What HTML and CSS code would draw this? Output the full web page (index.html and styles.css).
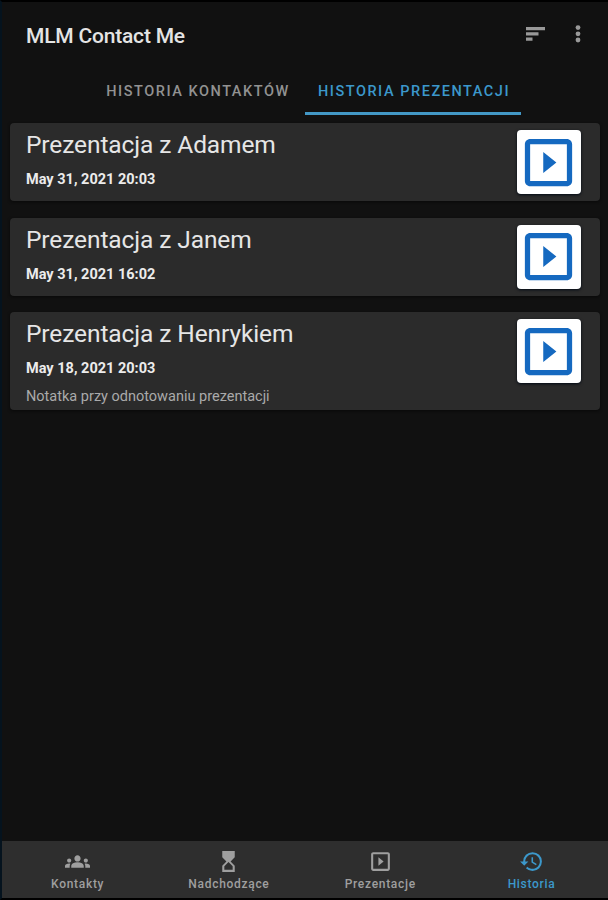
FILE: index.html
```
<!DOCTYPE html>
<html lang="pl">
<head>
<meta charset="utf-8">
<title>MLM Contact Me</title>
<link rel="stylesheet" href="styles.css">
</head>
<body>
<svg class="sprite" aria-hidden="true">
  <symbol id="slideshow" viewBox="0 0 24 24"><path d="M10 8v8l5-4-5-4zm9-5H5c-1.100 0-2 .9-2 2v14c0 1.100.9 2 2 2h14c1.100 0 2-.9 2-2V5c0-1.100-.9-2-2-2zm0 16H5V5h14v14z"/></symbol>
</svg>
<div class="app">
  <header class="bar">
    <h1 class="title">MLM Contact Me</h1>
    <svg class="sort" viewBox="0 0 19 14"><path d="M0 0h19v3.200H0zM0 5.300h12.500v3.200H0zM0 10.600h6.500v3.200H0z"/></svg>
    <svg class="more" viewBox="0 0 6 18"><circle cx="3" cy="2.600" r="2.400"/><circle cx="3" cy="8.800" r="2.400"/><circle cx="3" cy="15" r="2.400"/></svg>
  </header>
  <nav class="tabs">
    <a class="tab"><span>HISTORIA KONTAKTÓW</span></a>
    <a class="tab active"><span>HISTORIA PREZENTACJI</span></a>
  </nav>
  <main class="list">
    <article class="card">
      <div class="info"><h2 class="name">Prezentacja z Adamem</h2><p class="date">May 31, 2021 20:03</p></div>
      <button class="play"><svg><use href="#slideshow"/></svg></button>
    </article>
    <article class="card">
      <div class="info"><h2 class="name">Prezentacja z Janem</h2><p class="date">May 31, 2021 16:02</p></div>
      <button class="play"><svg><use href="#slideshow"/></svg></button>
    </article>
    <article class="card tall">
      <div class="info"><h2 class="name">Prezentacja z Henrykiem</h2><p class="date">May 18, 2021 20:03</p><p class="note">Notatka przy odnotowaniu prezentacji</p></div>
      <button class="play"><svg><use href="#slideshow"/></svg></button>
    </article>
  </main>
  <footer class="nav">
    <a class="item"><svg viewBox="0 0 24 24"><path d="M12 12.750c1.630 0 3.070.39 4.240.9 1.080.48 1.760 1.560 1.760 2.730V18H6v-1.610c0-1.180.68-2.260 1.760-2.730 1.170-.52 2.610-.91 4.240-.91zM4 13c1.100 0 2-.9 2-2s-.9-2-2-2-2 .9-2 2 .9 2 2 2zm1.130 1.100c-.37-.06-.74-.1-1.130-.1-.99 0-1.930.21-2.780.58C.48 14.900 0 15.620 0 16.430V18h4.500v-1.610c0-.83.23-1.610.63-2.290zM20 13c1.100 0 2-.9 2-2s-.9-2-2-2-2 .9-2 2 .9 2 2 2zm4 3.430c0-.81-.48-1.530-1.220-1.850-.85-.37-1.790-.58-2.780-.58-.39 0-.76.04-1.130.1.400.68.630 1.460.63 2.290V18H24v-1.570zM12 6c1.660 0 3 1.340 3 3s-1.340 3-3 3-3-1.340-3-3 1.340-3 3-3z"/></svg><span>Kontakty</span></a>
    <a class="item"><svg viewBox="0 0 24 24"><path d="M18 22l-.01-6L14 12l3.990-4.010L18 2H6v6l4 4-4 3.990V22h12zM8 16.500l4-4 4 4V20H8v-3.500z"/></svg><span>Nadchodzące</span></a>
    <a class="item"><svg><use href="#slideshow"/></svg><span>Prezentacje</span></a>
    <a class="item on"><svg viewBox="0 0 24 24"><path d="M13 3a9 9 0 0 0-9 9H1l3.890 3.890.07.14L9 12H6c0-3.870 3.130-7 7-7s7 3.130 7 7-3.130 7-7 7c-1.930 0-3.680-.79-4.940-2.060l-1.420 1.420A8.954 8.954 0 0 0 13 21a9 9 0 0 0 0-18zm-1 5v5l4.280 2.540.72-1.210-3.500-2.080V8H12z"/></svg><span>Historia</span></a>
  </footer>
</div>
</body>
</html>
```
FILE: styles.css
```
* { box-sizing: border-box; margin: 0; padding: 0; }
body { background: #000; font-family: Roboto, "Noto Sans", sans-serif; }
svg { display: block; fill: currentColor; flex: none; }
.sprite { display: none; }
.app {
  width: 608px; height: 900px; display: flex; flex-direction: column;
  background: #111; border-top: 2px solid #000; border-bottom: 2px solid #000;
  border-left: 2px solid #05131e;
}
.bar { height: 64px; flex: none; display: flex; align-items: center; padding: 0 27px 0 24px; color: #999; }
.title { flex: 1; font-size: 21px; font-weight: 500; letter-spacing: -.2px; line-height: 26px; color: #e4e4e4; padding-top: 3px; }
.sort { width: 19px; height: 14px; margin-right: 30px; }
.more { width: 6px; height: 18px; }
.tabs { height: 49px; flex: none; display: flex; padding-left: 87px; }
.tab {
  display: flex; justify-content: center; align-items: center; width: 216px; height: 49px;
  font-size: 14.500px; font-weight: 500; letter-spacing: 1.540px; color: #929292; white-space: nowrap;
  border-bottom: 3px solid transparent; padding: 4px 0 0 2px;
}
.tab.active { color: #3c98cb; border-color: #4398c6; }
.list { flex: 1; padding: 8px 8px 0; display: flex; flex-direction: column; gap: 16.500px; }
.card {
  height: 78px; display: flex; justify-content: space-between; padding: 7px 19.500px 0 16px;
  border-radius: 4px; background: #2b2b2b; box-shadow: 0 1px 3px #080808;
}
.card.tall { height: 98px; }
.info { white-space: nowrap; padding-top: 1px; }
.name { font-size: 24.500px; font-weight: 400; letter-spacing: -.1px; line-height: 28px; color: #e6e6e6; }
.date { font-size: 14.500px; font-weight: 700; line-height: 18px; margin-top: 12px; color: #ececec; }
.note { font-size: 14.500px; line-height: 18px; margin-top: 10px; color: #aaa; }
.play {
  width: 63.500px; height: 64px; flex: none; border: 0; border-radius: 4px; background: #fff; color: #1569c0;
  display: flex; align-items: center; justify-content: center; box-shadow: 0 1px 3px #000914;
}
.play svg { width: 63px; height: 63px; }
.nav { height: 57px; flex: none; display: grid; grid-template-columns: repeat(4, 151.300px); background: #2e2e2e; color: #9f9f9f; }
.item { display: flex; flex-direction: column; align-items: center; padding-top: 8px; font-size: 12px; font-weight: 500; letter-spacing: .7px; line-height: 16px; }
.item svg { width: 25px; height: 25px; margin-bottom: 2px; }
.item.on { color: #3c98cb; }
```
